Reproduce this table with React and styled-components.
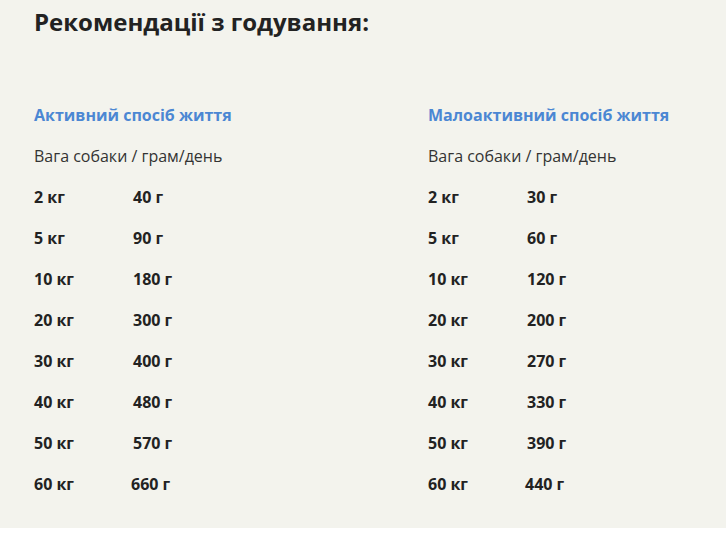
import styled, { createGlobalStyle } from "styled-components";

const GlobalStyle = createGlobalStyle`
     html, body {
          margin: 0;
          padding: 0;
          background: #ffffff;
     }
     body {
          font-family: "Open Sans", "Noto Sans", sans-serif;
          color: #222222;
     }
`;

const Section = styled.section`
     background: #f3f3ed;
     padding: 6px 34px 30px;
     height: 528px;
     box-sizing: border-box;

     .heading {
          margin: 0;
          font-size: 24px;
          line-height: 32px;
          font-weight: 700;
          color: #222222;
     }
`;

const Columns = styled.div`
     display: grid;
     grid-template-columns: 394px 1fr;
     margin-top: 66px;
`;

const Column = styled.div`
     display: flex;
     flex-direction: column;

     .title {
          margin: 0;
          font-size: 16px;
          line-height: 22px;
          font-weight: 700;
          color: #4b87d3;
     }
     .subtitle {
          margin: 19px 0 0;
          font-size: 16px;
          line-height: 22px;
          font-weight: 400;
          color: #333333;
     }
`;

const Rows = styled.div`
     display: flex;
     flex-direction: column;
     row-gap: 19px;
     margin-top: 19px;
`;

const Row = styled.div`
     display: grid;
     grid-template-columns: 99px auto;
     font-size: 16px;
     line-height: 22px;
     font-weight: 700;
     color: #222222;

     .value {
          margin-left: ${(props) => (props.$shift ? "-2px" : "0")};
     }
`;

const active = [
     ["2 кг", "40 г"],
     ["5 кг", "90 г"],
     ["10 кг", "180 г"],
     ["20 кг", "300 г"],
     ["30 кг", "400 г"],
     ["40 кг", "480 г"],
     ["50 кг", "570 г"],
     ["60 кг", "660 г"],
];

const lowActive = [
     ["2 кг", "30 г"],
     ["5 кг", "60 г"],
     ["10 кг", "120 г"],
     ["20 кг", "200 г"],
     ["30 кг", "270 г"],
     ["40 кг", "330 г"],
     ["50 кг", "390 г"],
     ["60 кг", "440 г"],
];

const FeedColumn = ({ title, rows }) => (
     <Column>
          <h3 className="title">{title}</h3>
          <p className="subtitle">Вага собаки / грам/день</p>
          <Rows>
               {rows.map(([weight, grams], i) => (
                    <Row key={weight} $shift={i === rows.length - 1}>
                         <span>{weight}</span>
                         <span className="value">{grams}</span>
                    </Row>
               ))}
          </Rows>
     </Column>
);

const App = () => {
     return (
          <>
               <GlobalStyle />
               <Section>
                    <h2 className="heading">Рекомендації з годування:</h2>
                    <Columns>
                         <FeedColumn title="Активний спосіб життя" rows={active} />
                         <FeedColumn title="Малоактивний спосіб життя" rows={lowActive} />
                    </Columns>
               </Section>
          </>
     );
};

export default App;
